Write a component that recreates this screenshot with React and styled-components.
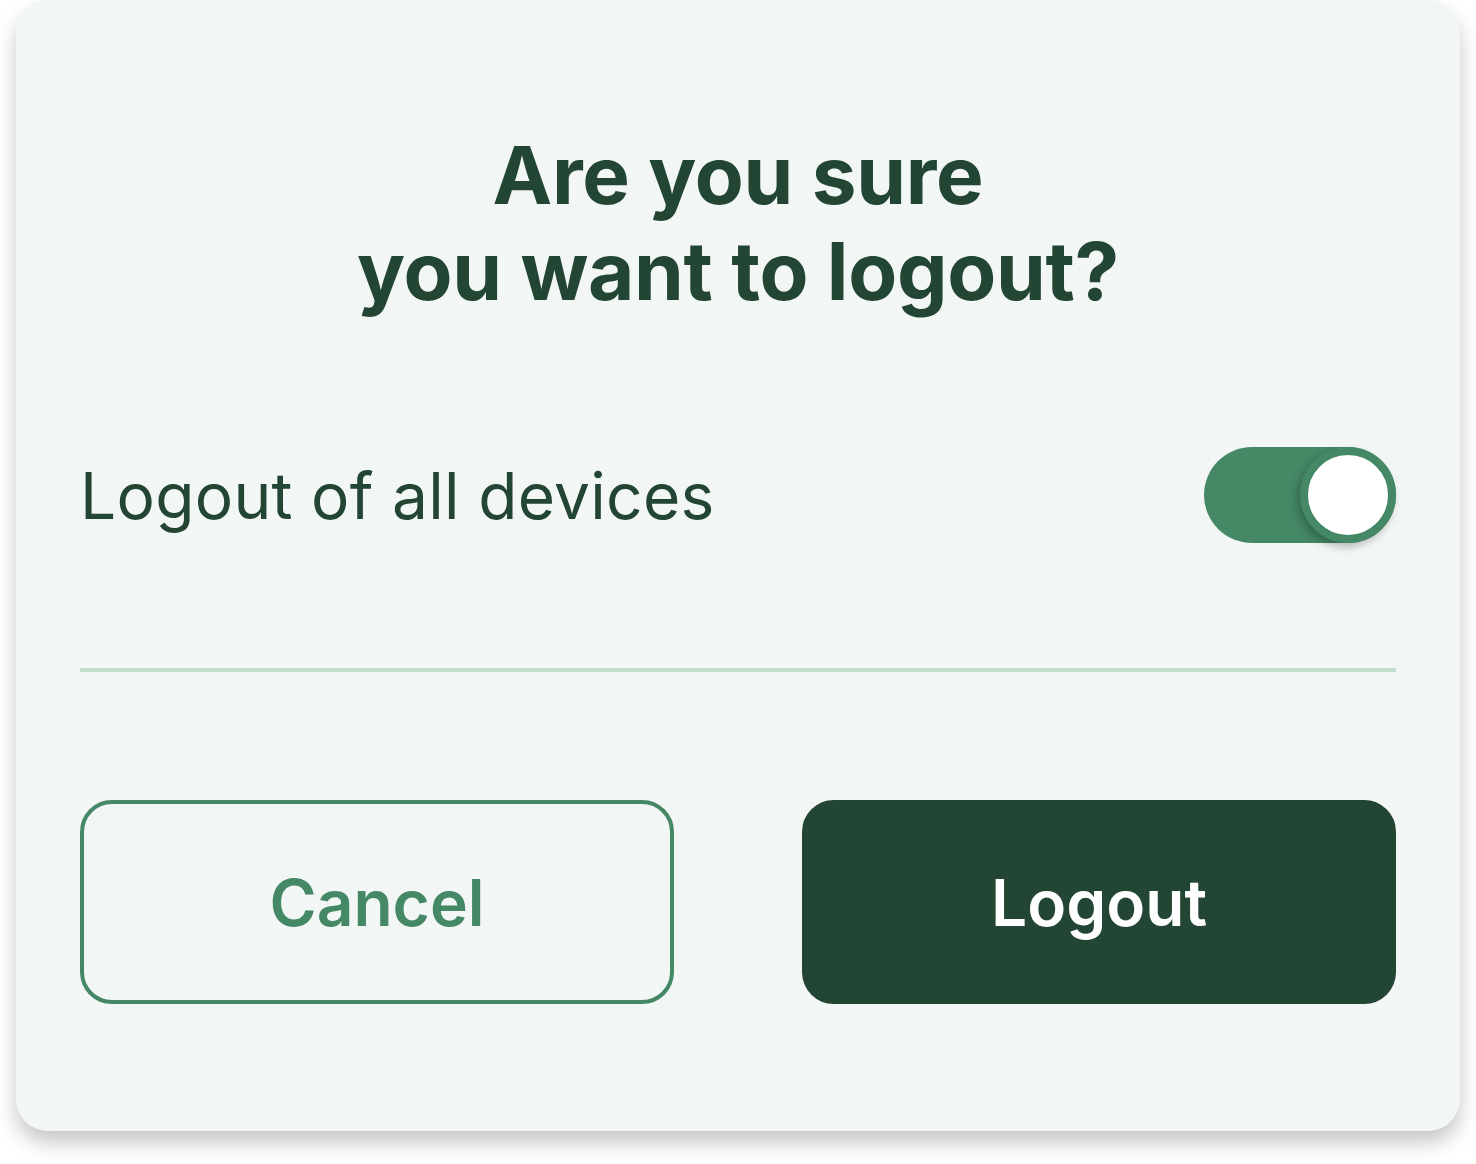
import React, { useState } from "react";
import styled, { createGlobalStyle } from "styled-components";

const GlobalStyle = createGlobalStyle`
  body {
    margin: 0;
    background: #ffffff;
    font-family: Inter, "Noto Sans", sans-serif;
  }
`;

const Page = styled.div`
  padding: 0 16px 32px;
`;

const Card = styled.div`
  background-color: #f2f6f4;
  border-radius: 32px;
  box-shadow: rgba(0, 0, 0, 0.22) 0 12px 20px;
  padding: 127px 64px 127px;
  display: flex;
  flex-direction: column;
`;

const Title = styled.h1`
  margin: 0;
  text-align: center;
  font-size: 80px;
  line-height: 96px;
  font-weight: 700;
  letter-spacing: -0.3px;
  color: #234534;
`;

const OptionRow = styled.div`
  display: flex;
  align-items: center;
  justify-content: space-between;
  margin-top: 128px;
`;

const OptionLabel = styled.span`
  font-size: 64px;
  font-weight: 400;
  letter-spacing: 0.3px;
  color: #234534;
`;

const Track = styled.button`
  width: 192px;
  height: 96px;
  border: none;
  border-radius: 48px;
  padding: 0;
  background-color: ${({ $on }) => ($on ? "#448866" : "#c2ddcc")};
  display: flex;
  justify-content: ${({ $on }) => ($on ? "flex-end" : "flex-start")};
  align-items: center;
  cursor: pointer;
`;

const Knob = styled.span`
  width: 80px;
  height: 80px;
  border-radius: 50%;
  background: #ffffff;
  border: 8px solid #448866;
  box-shadow: rgba(0, 0, 0, 0.25) -3px 4px 8px;
`;

const Divider = styled.hr`
  border: none;
  height: 4px;
  margin: 125px 0 0;
  background-color: #c2ddcc;
`;

const Buttons = styled.div`
  display: grid;
  grid-template-columns: 1fr 1fr;
  gap: 128px;
  margin-top: 128px;
`;

const Button = styled.button`
  height: 204px;
  border-radius: 32px;
  font-family: Inter, "Noto Sans", sans-serif;
  font-size: 64px;
  font-weight: 600;
  cursor: pointer;
  border: 4px solid ${({ $primary }) => ($primary ? "#234534" : "#448866")};
  background-color: ${({ $primary }) => ($primary ? "#234534" : "transparent")};
  color: ${({ $primary }) => ($primary ? "#ffffff" : "#448866")};
`;

const App = () => {
  const [allDevices, setAllDevices] = useState(true);

  return (
    <Page>
      <GlobalStyle />
      <Card>
        <Title>
          Are you sure
          <br />
          you want to logout?
        </Title>
        <OptionRow>
          <OptionLabel>Logout of all devices</OptionLabel>
          <Track $on={allDevices} onClick={() => setAllDevices(!allDevices)}>
            <Knob />
          </Track>
        </OptionRow>
        <Divider />
        <Buttons>
          <Button>Cancel</Button>
          <Button $primary>Logout</Button>
        </Buttons>
      </Card>
    </Page>
  );
};

export default App;
